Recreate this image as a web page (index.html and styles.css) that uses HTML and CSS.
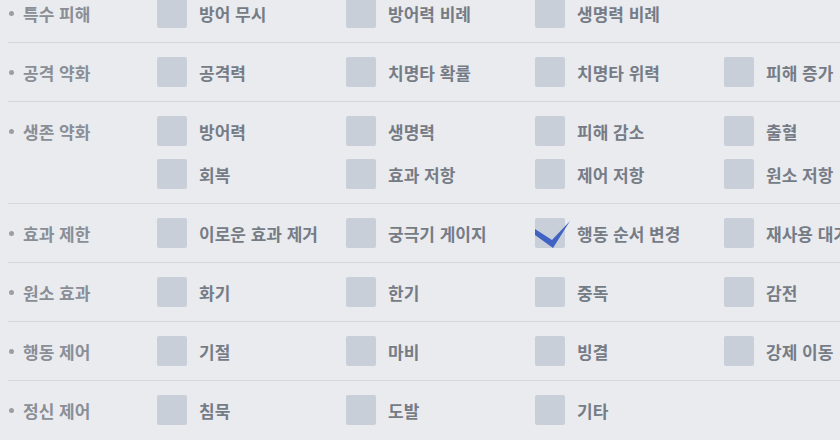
FILE: index.html
```html
<!DOCTYPE html>
<html lang="ko">
<head>
    <meta charset="UTF-8">
    <meta name="viewport" content="width=device-width, initial-scale=1.0">
    <title>효과 필터</title>
    <link rel="stylesheet" href="styles.css">
</head>
<body>

<div class="filter-list">
    <div class="filter-row">
        <div class="group-label">특수 피해</div>
        <div class="options">
            <label class="option"><span class="box"></span>방어 무시</label>
            <label class="option"><span class="box"></span>방어력 비례</label>
            <label class="option"><span class="box"></span>생명력 비례</label>
        </div>
    </div>
    <div class="filter-row">
        <div class="group-label">공격 약화</div>
        <div class="options">
            <label class="option"><span class="box"></span>공격력</label>
            <label class="option"><span class="box"></span>치명타 확률</label>
            <label class="option"><span class="box"></span>치명타 위력</label>
            <label class="option"><span class="box"></span>피해 증가</label>
        </div>
    </div>
    <div class="filter-row">
        <div class="group-label">생존 약화</div>
        <div class="options">
            <label class="option"><span class="box"></span>방어력</label>
            <label class="option"><span class="box"></span>생명력</label>
            <label class="option"><span class="box"></span>피해 감소</label>
            <label class="option"><span class="box"></span>출혈</label>
            <label class="option"><span class="box"></span>회복</label>
            <label class="option"><span class="box"></span>효과 저항</label>
            <label class="option"><span class="box"></span>제어 저항</label>
            <label class="option"><span class="box"></span>원소 저항</label>
        </div>
    </div>
    <div class="filter-row">
        <div class="group-label">효과 제한</div>
        <div class="options">
            <label class="option"><span class="box"></span>이로운 효과 제거</label>
            <label class="option"><span class="box"></span>궁극기 게이지</label>
            <label class="option checked">
                <span class="box">
                    <svg class="tick" width="36" height="30" viewBox="0 -3 36 30">
                        <polygon points="0,6 17,17 35,-2 18,25 0,12" fill="#4062c2"/>
                    </svg>
                </span>행동 순서 변경</label>
            <label class="option"><span class="box"></span>재사용 대기</label>
        </div>
    </div>
    <div class="filter-row">
        <div class="group-label">원소 효과</div>
        <div class="options">
            <label class="option"><span class="box"></span>화기</label>
            <label class="option"><span class="box"></span>한기</label>
            <label class="option"><span class="box"></span>중독</label>
            <label class="option"><span class="box"></span>감전</label>
        </div>
    </div>
    <div class="filter-row">
        <div class="group-label">행동 제어</div>
        <div class="options">
            <label class="option"><span class="box"></span>기절</label>
            <label class="option"><span class="box"></span>마비</label>
            <label class="option"><span class="box"></span>빙결</label>
            <label class="option"><span class="box"></span>강제 이동</label>
        </div>
    </div>
    <div class="filter-row">
        <div class="group-label">정신 제어</div>
        <div class="options">
            <label class="option"><span class="box"></span>침묵</label>
            <label class="option"><span class="box"></span>도발</label>
            <label class="option"><span class="box"></span>기타</label>
        </div>
    </div>
</div>

</body>
</html>
```

FILE: styles.css
```css
body {
    margin: 0;
    background-color: #e9ebef;
    font-family: "Noto Sans CJK KR", "Noto Sans", sans-serif;
    overflow: hidden;
}
.filter-list {
    margin-top: -16px;
    padding-left: 8px;
}
.filter-row {
    display: flex;
    padding: 14px 0;
    border-bottom: 1px solid #d4d7dd;
}
.filter-row:last-child {
    border-bottom: none;
}
.group-label {
    flex: 0 0 149px;
    display: flex;
    align-items: center;
    height: 30px;
    font-size: 17px;
    font-weight: 700;
    color: #8a8e96;
}
.group-label::before {
    content: "";
    width: 5px;
    height: 5px;
    margin: 0 9px 0 1px;
    border-radius: 50%;
    background-color: #9a9ea5;
}
.options {
    display: grid;
    grid-template-columns: repeat(4, 189px);
    row-gap: 13px;
    flex-shrink: 0;
}
.option {
    display: flex;
    align-items: center;
    height: 30px;
    font-size: 17px;
    font-weight: 700;
    color: #767c86;
    white-space: nowrap;
}
.box {
    position: relative;
    width: 30px;
    height: 30px;
    margin-right: 12px;
    border-radius: 2px;
    background-color: #c9cfd9;
    flex-shrink: 0;
}
.tick {
    position: absolute;
    left: 0;
    top: 2px;
    overflow: visible;
}
```
